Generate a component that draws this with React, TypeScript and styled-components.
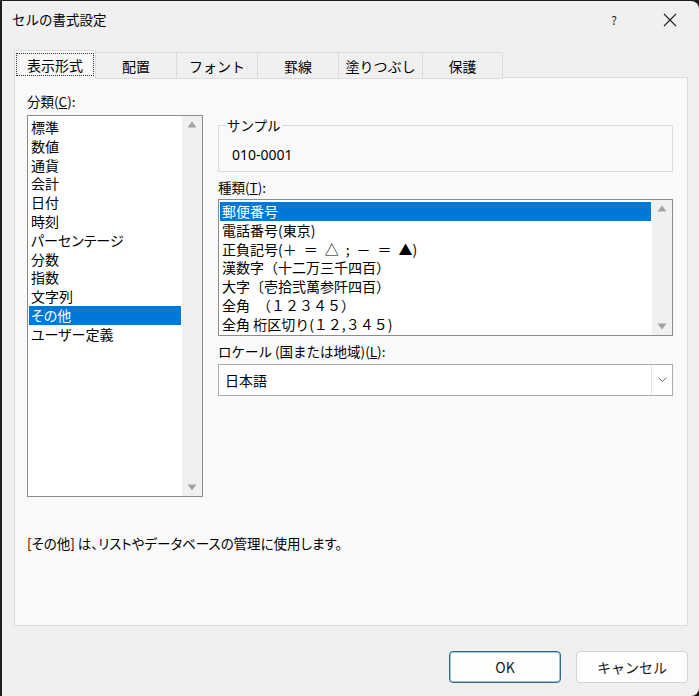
import React from 'react';
import styled, { createGlobalStyle } from 'styled-components';

const GlobalStyle = createGlobalStyle`
    html, body {
        margin: 0;
        padding: 0;
        background: #1c1c1c;
    }
    body {
        font-family: 'Noto Sans CJK JP', 'Noto Sans', sans-serif;
        color: #000;
    }
`;

const Window = styled.div`
    width: 697px;
    height: 695px;
    margin-left: 2px;
    margin-top: 1px;
    background: #f0f0f0;
    border-radius: 0 8px 8px 0;
    display: flex;
    flex-direction: column;
    overflow: hidden;
`;

const TitleBar = styled.div`
    height: 37px;
    display: flex;
    align-items: center;
    padding-left: 10px;
    padding-right: 14px;
`;

const Title = styled.div`
    flex: 1;
    font-size: 13.5px;
    margin-top: -1px;
`;

const TitleButton = styled.div<{ $w: number }>`
    width: ${(p) => p.$w}px;
    height: 30px;
    display: flex;
    align-items: center;
    justify-content: center;
    font-size: 12px;
    color: #222;
`;

const Body = styled.div`
    flex: 1;
    display: flex;
    flex-direction: column;
    padding: 12px 11px 0 12px;
`;

const TabStrip = styled.div`
    display: flex;
    height: 28px;
    position: relative;
    z-index: 1;
`;

const Tab = styled.div<{ $w: number; $active?: boolean }>`
    width: ${(p) => p.$w}px;
    box-sizing: border-box;
    display: flex;
    align-items: center;
    justify-content: center;
    font-size: 14px;
    background: ${(p) => (p.$active ? '#f9f9f9' : '#f0f0f0')};
    border: 1px solid #dcdcdc;
    border-bottom: ${(p) => (p.$active ? '1px solid #f9f9f9' : '1px solid #dcdcdc')};
    border-left: ${(p) => (p.$active ? '1px solid #dcdcdc' : 'none')};
    margin-top: ${(p) => (p.$active ? '0' : '2px')};
    height: ${(p) => (p.$active ? '29px' : '27px')};
`;

const FocusRect = styled.span`
    display: flex;
    align-items: center;
    justify-content: center;
    width: 78px;
    height: 23px;
    border: 1px dotted #333;
    box-sizing: border-box;
`;

const Panel = styled.div`
    height: 549px;
    box-sizing: border-box;
    background: #f9f9f9;
    border: 1px solid #dcdcdc;
    margin-top: -1px;
    display: flex;
    flex-direction: column;
    padding: 14px 14px 0 12px;
`;

const Columns = styled.div`
    display: flex;
    gap: 15px;
`;

const LeftCol = styled.div`
    width: 176px;
    display: flex;
    flex-direction: column;
`;

const RightCol = styled.div`
    flex: 1;
    display: flex;
    flex-direction: column;
    padding-top: 24px;
`;

const Label = styled.div<{ $mt?: number; $mb?: number }>`
    font-size: 13.5px;
    line-height: 18px;
    margin-top: ${(p) => p.$mt ?? 0}px;
    margin-bottom: ${(p) => p.$mb ?? 5}px;
`;

const ListBox = styled.div<{ $h: number }>`
    height: ${(p) => p.$h}px;
    box-sizing: border-box;
    border: 1px solid #8c8c8c;
    background: #fff;
    display: flex;
`;

const Items = styled.div`
    flex: 1;
    padding: 2px 1px 0 1px;
    overflow: hidden;
`;

const Item = styled.div<{ $sel?: boolean; $prop?: boolean }>`
    height: 18.8px;
    line-height: 18.8px;
    font-size: 14px;
    padding-left: 2px;
    white-space: pre;
    font-feature-settings: ${(p) => (p.$prop ? "'palt'" : 'normal')};
    background: ${(p) => (p.$sel ? '#0078d7' : 'transparent')};
    color: ${(p) => (p.$sel ? '#fff' : '#000')};
`;

const ScrollBar = styled.div`
    width: 20px;
    background: #f0f0f0;
    display: flex;
    flex-direction: column;
    justify-content: space-between;
    align-items: center;
    padding: 5px 0 5px;
`;

const Arrow = ({ down }: { down?: boolean }) => (
    <svg width="10" height="8" viewBox="0 0 10 8">
        <path d={down ? 'M0.5 1.5 H9.5 L5 7.5 Z' : 'M0.5 6.5 H9.5 L5 0.5 Z'} fill="#a3a3a3" />
    </svg>
);

const GroupBox = styled.div`
    margin-top: 9px;
    height: 47px;
    box-sizing: border-box;
    border: 1px solid #dcdcdc;
    display: flex;
    flex-direction: column;
    align-items: flex-start;
    padding-left: 13px;
`;

const Legend = styled.div`
    font-size: 13.5px;
    line-height: 16px;
    padding: 0 1px;
    margin: -9px 0 0 -6px;
    background: #f9f9f9;
`;

const SampleValue = styled.div`
    margin-top: 12px;
    font-size: 14px;
    line-height: 20px;
    font-family: 'Noto Sans', 'Noto Sans CJK JP', sans-serif;
`;

const Combo = styled.div`
    height: 32px;
    box-sizing: border-box;
    border: 1px solid #acacac;
    background: #fff;
    display: flex;
    align-items: center;
`;

const ComboText = styled.div`
    flex: 1;
    padding-left: 6px;
    font-size: 14px;
`;

const ComboButton = styled.div`
    width: 20px;
    height: 30px;
    border-left: 1px solid #e3e3e3;
    display: flex;
    align-items: center;
    justify-content: center;
`;

const Description = styled.div`
    margin-top: 36px;
    font-size: 13.5px;
    font-feature-settings: 'palt';
`;

const Footer = styled.div`
    display: flex;
    justify-content: flex-end;
    gap: 15px;
    padding: 25px 0 0;
`;

const Button = styled.button<{ $primary?: boolean }>`
    width: 112px;
    height: 32px;
    box-sizing: border-box;
    border-radius: 4px;
    font-family: 'Noto Sans CJK JP', 'Noto Sans', sans-serif;
    font-size: 14px;
    color: #1a1a1a;
    background: #fdfdfd;
    border: ${(p) => (p.$primary ? '1px solid #2d6a8a' : '1px solid #d4d4d4')};
    box-shadow: ${(p) => (p.$primary ? 'inset 0 0 0 1px #a6c3d3' : 'none')};
`;

const categories = [
    '標準',
    '数値',
    '通貨',
    '会計',
    '日付',
    '時刻',
    'パーセンテージ',
    '分数',
    '指数',
    '文字列',
    'その他',
    'ユーザー定義',
];

const types = [
    '郵便番号',
    '電話番号(東京)',
    '正負記号(＋\u2002＝\u2002△\u2002;\u2002－\u2002＝\u2002▲)',
    '漢数字（十二万三千四百）',
    '大字〔壱拾弐萬参阡四百）',
    '全角　（１２３４５）',
    '全角 桁区切り(１２,３４５)',
];

const tabs = [
    { title: '表示形式', w: 82 },
    { title: '配置', w: 81 },
    { title: 'フォント', w: 81 },
    { title: '罫線', w: 81 },
    { title: '塗りつぶし', w: 84 },
    { title: '保護', w: 80 },
];

export default function App() {
    return (
        <>
            <GlobalStyle />
            <Window>
                <TitleBar>
                    <Title>セルの書式設定</Title>
                    <TitleButton $w={30}>?</TitleButton>
                    <div style={{ width: 26 }} />
                    <TitleButton $w={30}>
                        <svg width="14" height="14" viewBox="0 0 14 14">
                            <path d="M1 1 L13 13 M13 1 L1 13" stroke="#222" strokeWidth="1.1" />
                        </svg>
                    </TitleButton>
                </TitleBar>
                <Body>
                    <TabStrip>
                        {tabs.map((t, i) => (
                            <Tab key={t.title} $w={t.w} $active={i === 0}>
                                {i === 0 ? <FocusRect>{t.title}</FocusRect> : t.title}
                            </Tab>
                        ))}
                    </TabStrip>
                    <Panel>
                        <Columns>
                            <LeftCol>
                                <Label>
                                    分類(<u>C</u>):
                                </Label>
                                <ListBox $h={382}>
                                    <Items>
                                        {categories.map((c) => (
                                            <Item key={c} $prop $sel={c === 'その他'}>
                                                {c}
                                            </Item>
                                        ))}
                                    </Items>
                                    <ScrollBar>
                                        <Arrow />
                                        <Arrow down />
                                    </ScrollBar>
                                </ListBox>
                            </LeftCol>
                            <RightCol>
                                <GroupBox>
                                    <Legend>サンプル</Legend>
                                    <SampleValue>010-0001</SampleValue>
                                </GroupBox>
                                <Label $mt={6} $mb={3}>
                                    種類(<u>T</u>):
                                </Label>
                                <ListBox $h={137}>
                                    <Items>
                                        {types.map((t, i) => (
                                            <Item key={t} $sel={i === 0}>
                                                {t}
                                            </Item>
                                        ))}
                                    </Items>
                                    <ScrollBar>
                                        <Arrow />
                                        <Arrow down />
                                    </ScrollBar>
                                </ListBox>
                                <Label $mt={6} $mb={4}>
                                    ロケール (国または地域)(<u>L</u>):
                                </Label>
                                <Combo>
                                    <ComboText>日本語</ComboText>
                                    <ComboButton>
                                        <svg width="9" height="6" viewBox="0 0 9 6">
                                            <path d="M0.5 0.5 L4.5 4.5 L8.5 0.5" fill="none" stroke="#777" strokeWidth="1" />
                                        </svg>
                                    </ComboButton>
                                </Combo>
                            </RightCol>
                        </Columns>
                        <Description>[その他] は、リストやデータベースの管理に使用します。</Description>
                    </Panel>
                    <Footer>
                        <Button $primary>OK</Button>
                        <Button>キャンセル</Button>
                    </Footer>
                </Body>
            </Window>
        </>
    );
}
